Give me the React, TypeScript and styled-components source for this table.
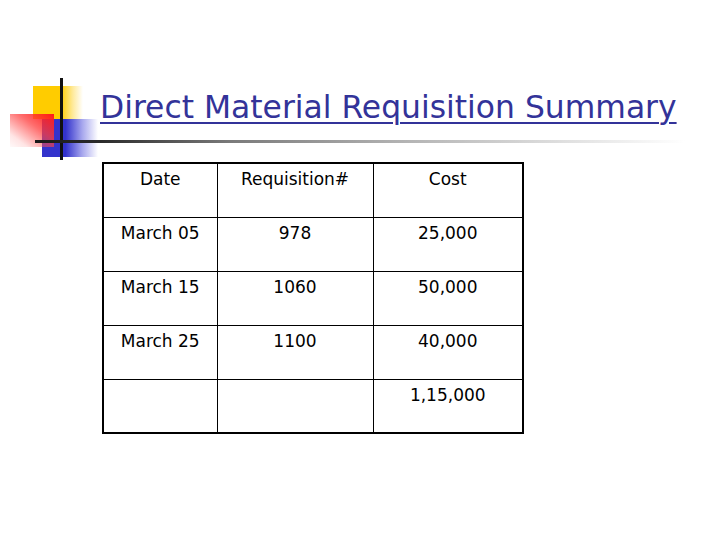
import styled, { createGlobalStyle } from "styled-components";

const GlobalStyle = createGlobalStyle`
  html, body {
    margin: 0;
    padding: 0;
    background: #ffffff;
  }
`;

const Slide = styled.div`
  width: 720px;
  height: 540px;
  display: flex;
  flex-direction: column;
  background: #ffffff;
  font-family: "DejaVu Sans", Verdana, sans-serif;
  overflow: hidden;
`;

const Header = styled.header`
  position: relative;
  height: 162px;
  display: flex;
  align-items: flex-start;
  padding: 89px 0 0 100px;
  box-sizing: border-box;
`;

// decorative squares and bars of the slide template, layered over each other
const Square = styled.div<{ left: number; top: number; w: number; h: number; fill: string }>`
  position: absolute;
  left: ${(p) => p.left}px;
  top: ${(p) => p.top}px;
  width: ${(p) => p.w}px;
  height: ${(p) => p.h}px;
  background: ${(p) => p.fill};
`;

const VBar = styled.div`
  position: absolute;
  left: 60px;
  top: 78px;
  width: 3px;
  height: 82px;
  background: #111111;
`;

const HRule = styled.div`
  position: absolute;
  left: 35px;
  top: 140px;
  width: 650px;
  height: 3px;
  background: linear-gradient(
    to right,
    #1a1a1a 0%,
    #2a2a2a 10%,
    #7a7a7a 30%,
    #b0b0b0 55%,
    #dddddd 80%,
    #ffffff 100%
  );
`;

const Title = styled.h1`
  position: relative;
  margin: 0;
  font-size: 31.4px;
  font-weight: normal;
  line-height: 36px;
  color: #333399;
  text-decoration: underline;
  text-decoration-thickness: 2px;
  text-underline-offset: 4px;
  white-space: nowrap;
`;

const Body = styled.main`
  display: flex;
  padding-left: 102px;
`;

const Table = styled.table`
  width: 420px;
  border-collapse: collapse;
  table-layout: fixed;
  border: 2px solid #000000;
`;

const Cell = styled.td`
  height: 54px;
  padding: 5px 0 0;
  border: 1px solid #000000;
  vertical-align: top;
  text-align: center;
  font-size: 17px;
  line-height: 20px;
  color: #000000;
  box-sizing: border-box;
`;

const rows = [
  ["Date", "Requisition#", "Cost"],
  ["March 05", "978", "25,000"],
  ["March 15", "1060", "50,000"],
  ["March 25", "1100", "40,000"],
  ["", "", "1,15,000"],
];

export default function App() {
  return (
    <Slide>
      <GlobalStyle />
      <Header>
        <Square
          left={33}
          top={86}
          w={50}
          h={33}
          fill="linear-gradient(to right, #ffcc00 0%, #ffcc00 55%, rgba(255,214,60,0.5) 80%, rgba(255,230,120,0) 100%)"
        />
        <Square
          left={42}
          top={119}
          w={56}
          h={38}
          fill="linear-gradient(to right, #3333cc 0%, #3333cc 42%, rgba(80,80,220,0.5) 72%, rgba(120,120,240,0) 100%)"
        />
        <Square
          left={10}
          top={114}
          w={44}
          h={33}
          fill="linear-gradient(to bottom left, #ff1a1a 0%, rgba(255,60,60,0.75) 40%, rgba(255,150,150,0.25) 80%, rgba(255,200,200,0.1) 100%)"
        />
        <VBar />
        <HRule />
        <Title>Direct Material Requisition Summary</Title>
      </Header>
      <Body>
        <Table>
          <colgroup>
            <col style={{ width: 114 }} />
            <col style={{ width: 156 }} />
            <col style={{ width: 150 }} />
          </colgroup>
          <tbody>
            {rows.map((row, i) => (
              <tr key={i}>
                {row.map((text, j) => (
                  <Cell key={j}>{text}</Cell>
                ))}
              </tr>
            ))}
          </tbody>
        </Table>
      </Body>
    </Slide>
  );
}
